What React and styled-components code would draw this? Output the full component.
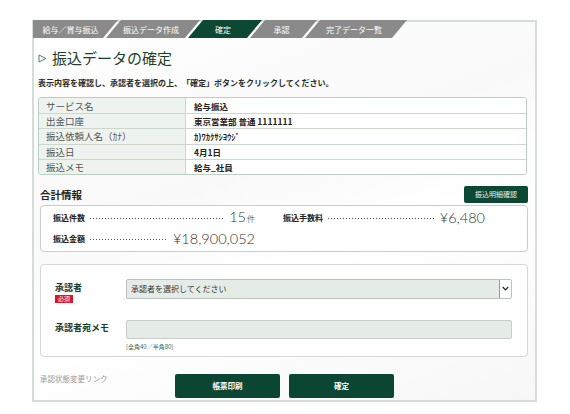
import React from 'react';
import styled, { createGlobalStyle } from 'styled-components';

const GlobalStyle = createGlobalStyle`
  body {
    margin: 0;
    background: #ffffff;
    font-family: "Noto Sans CJK JP", "Noto Sans", sans-serif;
  }
`;

const Page = styled.div`
  width: 570px;
  height: 414px;
  padding: 20px 0 0 32px;
  box-sizing: border-box;
`;

const Frame = styled.div`
  width: 505px;
  height: 382px;
  box-sizing: border-box;
  border: 2px solid #d4ddd7;
  background: linear-gradient(160deg, #ffffff 0%, #f9f9f9 40%, #ffffff 60%, #f7f7f7 100%);
  display: flex;
  flex-direction: column;
`;

const TabBar = styled.div`
  display: flex;
  height: 18px;
  flex: none;
  margin: -2px 0 0 -1px;
`;

const Tab = styled.div`
  width: ${p => p.w}px;
  margin-left: ${p => (p.first ? 0 : -12)}px;
  height: 18px;
  background: ${p => (p.active ? '#0c4833' : '#8a8a8a')};
  color: #fff;
  font-size: 8px;
  display: flex;
  align-items: center;
  justify-content: center;
  clip-path: ${p =>
    p.first
      ? 'polygon(0 0, 100% 0, calc(100% - 15px) 100%, 0 100%)'
      : 'polygon(15px 0, 100% 0, calc(100% - 15px) 100%, 0 100%)'};
  padding-left: ${p => (p.first ? 0 : 6)}px;
  padding-right: 10px;
  box-sizing: border-box;
`;

const Content = styled.div`
  padding: 0 8px 0 4px;
  display: flex;
  flex-direction: column;
`;

const Title = styled.h1`
  margin: 10px 0 0;
  height: 20px;
  display: flex;
  align-items: center;
  gap: 5px;
  font-size: 15px;
  line-height: 20px;
  font-weight: 400;
  color: #1d3f30;
`;

const Lead = styled.p`
  margin: 9px 0 0;
  font-size: 8px;
  line-height: 12px;
  height: 12px;
  font-weight: 700;
  color: #2a2a2a;
`;

const InfoTable = styled.div`
  margin-top: 8px;
  border: 1px solid #b9cfc0;
  border-radius: 3px;
  overflow: hidden;
  display: flex;
  flex-direction: column;
`;

const InfoRow = styled.div`
  display: flex;
  height: 15.2px;
  box-sizing: border-box;
  border-top: ${p => (p.first ? 'none' : '1px solid #cad8ce')};
`;

const InfoLabel = styled.div`
  width: 147px;
  flex: none;
  padding-left: 7px;
  box-sizing: border-box;
  background: #eef3ef;
  border-right: 1px solid #cad8ce;
  font-size: 9.5px;
  color: #555;
  display: flex;
  align-items: center;
`;

const InfoValue = styled.div`
  padding-left: 8px;
  background: #fff;
  flex: 1;
  font-size: 8.5px;
  font-weight: 700;
  color: #222;
  display: flex;
  align-items: center;
`;

const SectionHead = styled.div`
  margin-top: 11px;
  height: 17px;
  display: flex;
  align-items: center;
  justify-content: space-between;
  padding-left: 2px;
`;

const SectionTitle = styled.h2`
  margin: 0;
  font-size: 10.5px;
  font-weight: 700;
  color: #222;
`;

const SmallButton = styled.button`
  width: 64px;
  height: 17px;
  margin-right: -1px;
  border: none;
  border-radius: 2px;
  background: #0c4833;
  color: #e6eee9;
  font-family: inherit;
  font-size: 7px;
  padding: 0;
`;

const Box = styled.div`
  margin: ${p => p.mt}px -1px 0 2px;
  border: 1px solid ${p => p.line};
  border-radius: 4px;
  background: #fff;
`;

const SummaryGrid = styled.div`
  display: grid;
  grid-template-columns: 202px 202px;
  grid-auto-rows: 20px;
  column-gap: 28px;
  row-gap: 1px;
  padding: 2px 0 2px 12px;
`;

const SummaryItem = styled.div`
  display: flex;
  align-items: center;
  height: 20px;
  line-height: 20px;
`;

const SummaryLabel = styled.span`
  font-size: 8px;
  font-weight: 700;
  color: #222;
`;

const Dots = styled.span`
  flex: 1;
  height: 3px;
  margin: 1px 6px 0 4px;
  background-image: radial-gradient(circle, #555 0.6px, transparent 0.9px);
  background-size: 3px 3px;
`;

const Amount = styled.span`
  font-family: "Lato", "Noto Sans CJK JP", sans-serif;
  font-weight: 300;
  font-size: 14.5px;
  color: #333;
  small {
    font-family: "Noto Sans CJK JP", sans-serif;
    font-size: 8px;
    margin-left: 1px;
  }
`;

const FormBody = styled.div`
  padding: 14px 15px 0 14px;
  height: 91px;
  box-sizing: border-box;
`;

const FormRow = styled.div`
  display: flex;
  align-items: flex-start;
  height: ${p => p.h}px;
  margin-top: ${p => p.mt || 0}px;
`;

const FormLabel = styled.div`
  width: 71px;
  flex: none;
  display: flex;
  flex-direction: column;
  align-items: flex-start;
  padding-top: ${p => p.pt}px;
  font-size: 9px;
  line-height: 12px;
  font-weight: 700;
  color: #1b3d2e;
`;

const Required = styled.span`
  margin-top: 1px;
  background: #d8172b;
  color: #fff;
  font-size: 6px;
  line-height: 8px;
  padding: 0 3px;
  font-weight: 400;
`;

const Field = styled.div`
  flex: 1;
  display: flex;
  flex-direction: column;
`;

const Select = styled.div`
  height: 20px;
  box-sizing: border-box;
  border: 1px solid #b9c3bd;
  border-radius: 2px;
  background: #e5ece7;
  display: flex;
  align-items: center;
  justify-content: space-between;
  padding-left: 4px;
  font-size: 8px;
  color: #333;
`;

const Arrow = styled.span`
  width: 11px;
  height: 18px;
  border-left: 1px solid #999;
  background: #fff;
  display: flex;
  align-items: center;
  justify-content: center;
`;

const Input = styled.div`
  height: 19px;
  box-sizing: border-box;
  border: 1px solid #c6cec9;
  border-radius: 2px;
  background: #e5ece7;
`;

const Hint = styled.span`
  margin-top: 3px;
  font-size: 6px;
  line-height: 9px;
  color: #3a6a52;
`;

const Footer = styled.div`
  margin-top: 17px;
  display: flex;
  align-items: flex-start;
  padding-left: 2px;
`;

const LinkText = styled.span`
  width: 135px;
  margin-top: 0;
  font-size: 7.5px;
  line-height: 10px;
  color: #9a9a9a;
`;

const MainButton = styled.button`
  width: 105px;
  height: 24px;
  margin-left: ${p => p.ml}px;
  border: none;
  border-radius: 2px;
  background: #0a4631;
  color: #fff;
  font-family: inherit;
  font-size: 7.5px;
  font-weight: 700;
  padding: 0;
`;

const tabs = [
  { label: '給与／賞与振込', w: 85 },
  { label: '振込データ作成', w: 94 },
  { label: '確定', w: 74, active: true },
  { label: '承認', w: 67 },
  { label: '完了データ一覧', w: 102 },
];

const info = [
  ['サービス名', '給与振込'],
  ['出金口座', '東京営業部 普通 1111111'],
  ['振込依頼人名（ｶﾅ）', 'ｶ)ﾜｶｸｻｼﾖｳｼﾞ'],
  ['振込日', '4月1日'],
  ['振込メモ', '給与_社員'],
];

const App = () => {
  return (
    <Page>
      <GlobalStyle />
      <Frame>
        <TabBar>
          {tabs.map((t, i) => (
            <Tab key={t.label} w={t.w} first={i === 0} active={t.active}>
              {t.label}
            </Tab>
          ))}
        </TabBar>
        <Content>
          <Title>
            <svg width="9" height="9" viewBox="0 0 9 9">
              <path d="M1 1 L8 4.5 L1 8 Z" fill="none" stroke="#5b7a6a" strokeWidth="1" />
            </svg>
            振込データの確定
          </Title>
          <Lead>表示内容を確認し、承認者を選択の上、「確定」ボタンをクリックしてください。</Lead>
          <InfoTable>
            {info.map(([k, v], i) => (
              <InfoRow key={k} first={i === 0}>
                <InfoLabel>{k}</InfoLabel>
                <InfoValue>{v}</InfoValue>
              </InfoRow>
            ))}
          </InfoTable>
          <SectionHead>
            <SectionTitle>合計情報</SectionTitle>
            <SmallButton>振込明細確認</SmallButton>
          </SectionHead>
          <Box mt={2} line="#c9cdca">
            <SummaryGrid>
              <SummaryItem>
                <SummaryLabel>振込件数</SummaryLabel>
                <Dots />
                <Amount>15<small>件</small></Amount>
              </SummaryItem>
              <SummaryItem>
                <SummaryLabel>振込手数料</SummaryLabel>
                <Dots />
                <Amount>¥6,480</Amount>
              </SummaryItem>
              <SummaryItem>
                <SummaryLabel>振込金額</SummaryLabel>
                <Dots />
                <Amount>¥18,900,052</Amount>
              </SummaryItem>
            </SummaryGrid>
          </Box>
          <Box mt={12} line="#d3d8d5">
            <FormBody>
              <FormRow h={20}>
                <FormLabel pt={3}>
                  承認者
                  <Required>必須</Required>
                </FormLabel>
                <Field>
                  <Select>
                    承認者を選択してください
                    <Arrow>
                      <svg width="7" height="5" viewBox="0 0 7 5">
                        <path d="M0.8 1 L3.5 3.8 L6.2 1" fill="none" stroke="#222" strokeWidth="1.2" />
                      </svg>
                    </Arrow>
                  </Select>
                </Field>
              </FormRow>
              <FormRow h={19} mt={21}>
                <FormLabel pt={2}>承認者宛メモ</FormLabel>
                <Field>
                  <Input />
                  <Hint>[全角40／半角80]</Hint>
                </Field>
              </FormRow>
            </FormBody>
          </Box>
          <Footer>
            <LinkText>承認状態変更リンク</LinkText>
            <MainButton ml={0}>帳票印刷</MainButton>
            <MainButton ml={9}>確定</MainButton>
          </Footer>
        </Content>
      </Frame>
    </Page>
  );
};

export default App;
